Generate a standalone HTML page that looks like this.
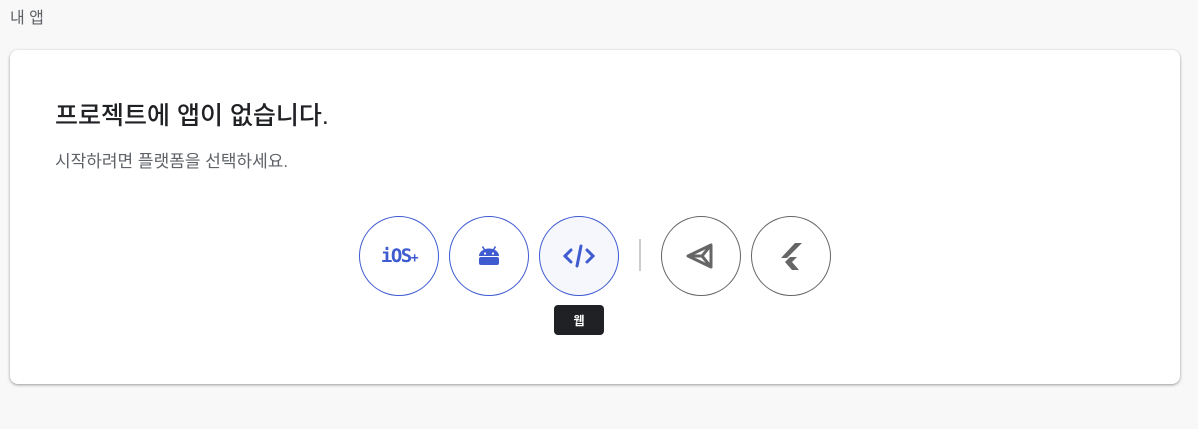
<!DOCTYPE html>
<html><head><meta charset="utf-8"><style>
html,body{margin:0;padding:0}
body{width:1198px;height:429px;background:#f8f8f8;font-family:"Liberation Sans","Noto Sans CJK KR",sans-serif;position:relative;overflow:hidden}
.top{position:absolute;left:10px;top:4px;font-size:16px;color:#5f6368}
.card{position:absolute;left:10px;top:50px;width:1170px;height:334px;background:#fff;border-radius:8px;box-shadow:0 1px 3px rgba(0,0,0,.3),0 1px 2px rgba(0,0,0,.1)}
h1{position:absolute;left:45px;top:46px;margin:0;font-size:25px;font-weight:500;color:#202124}
.sub{position:absolute;left:45px;top:97px;font-size:17px;color:#5f6368}
.c{position:absolute;top:166px;width:78px;height:78px;border-radius:50%;border:1px solid #3f5bd0;display:flex;align-items:center;justify-content:center;box-sizing:content-box}
.g{border-color:#666}
.div{position:absolute;left:629px;top:189px;width:2px;height:32px;background:#ccc}
.tip{position:absolute;left:544px;top:255px;width:50px;height:30px;background:#202124;border-radius:4px;color:#fff;font-size:12px;font-weight:bold;display:flex;align-items:center;justify-content:center}
</style></head><body>
<div class="top">내 앱</div>
<div class="card">
<h1>프로젝트에 앱이 없습니다.</h1>
<div class="sub">시작하려면 플랫폼을 선택하세요.</div>
<div class="c" style="left:349px"><span style="font-family:'DejaVu Sans Mono',monospace;font-weight:bold;color:#3f5bd0;font-size:19px;letter-spacing:-1.5px">iOS<span style="font-size:13px">+</span></span></div>
<div class="c" style="left:439px"><svg width="24" height="24" viewBox="0 0 24 24"><path d="M5.5 2.5l2.5 4M18.5 2.5l-2.5 4" stroke="#3f5bd0" stroke-width="1.6"/><path d="M2 12a10 7.5 0 0 1 20 0z" fill="#3f5bd0"/><rect x="2" y="13" width="20" height="8" rx="2" fill="#3f5bd0"/><circle cx="8" cy="9.5" r="1.1" fill="#fff"/><circle cx="16" cy="9.5" r="1.1" fill="#fff"/></svg></div>
<div class="c" style="left:529px;background:#f5f7fd"><svg width="34" height="26" viewBox="0 0 34 26"><path d="M9 7l-6 6 6 6M25 7l6 6-6 6M19 3l-4 20" stroke="#3f5bd0" stroke-width="3" fill="none" stroke-linecap="round"/></svg></div>
<div class="div"></div>
<div class="c g" style="left:651px"><svg width="32" height="30" viewBox="0 0 32 30"><path d="M3 15L26 4V26Z" fill="none" stroke="#666" stroke-width="3" stroke-linejoin="round"/><path d="M3 15H17L26 4M17 15L26 26" stroke="#666" stroke-width="3" fill="none"/></svg></div>
<div class="c g" style="left:741px"><svg width="26" height="30" viewBox="0 0 26 30"><path d="M17 2h7L9 17H3z" fill="#666"/><path d="M12 16h7l-5 5 7 8h-7l-7-8z" fill="#666"/></svg></div>
<div class="tip">웹</div>
</div>
</body></html>
